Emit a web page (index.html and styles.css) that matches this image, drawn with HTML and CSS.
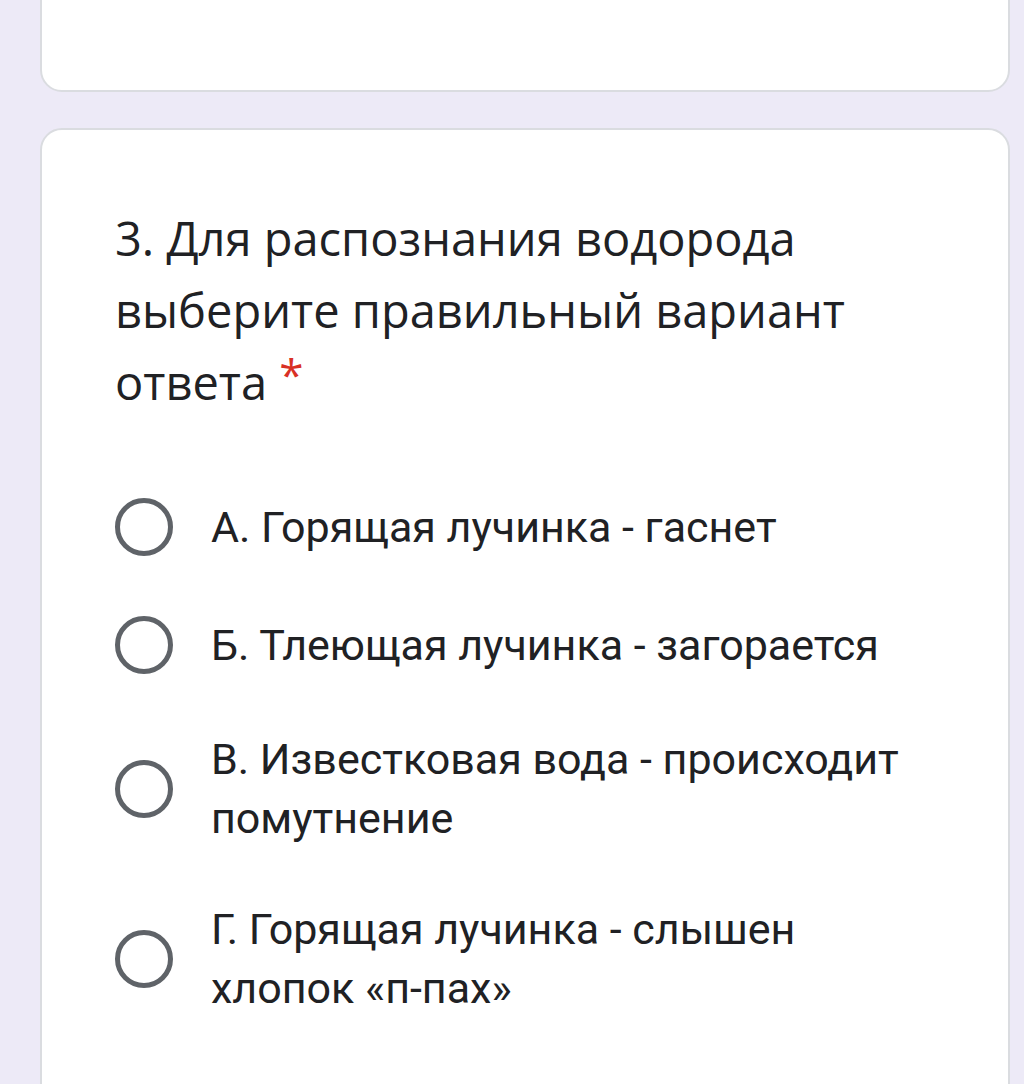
FILE: index.html
```html
<!DOCTYPE html>
<html lang="ru">
<head>
    <meta charset="UTF-8">
    <meta name="viewport" content="width=device-width, initial-scale=1.0">
    <title>Тест</title>
    <link rel="stylesheet" href="styles.css">
</head>
<body>
    <!-- Предыдущий вопрос (виден только низ карточки) -->
    <div class="card card-prev"></div>

    <!-- Вопрос 3 -->
    <div class="card card-question">
        <div class="question">
            3. Для распознания водорода выберите правильный вариант ответа <span class="required">*</span>
        </div>
        <ul class="options">
            <li class="option">
                <span class="radio"></span>
                <span class="option-text">А. Горящая лучинка - гаснет</span>
            </li>
            <li class="option">
                <span class="radio"></span>
                <span class="option-text">Б. Тлеющая лучинка - загорается</span>
            </li>
            <li class="option">
                <span class="radio"></span>
                <span class="option-text">В. Известковая вода - происходит помутнение</span>
            </li>
            <li class="option">
                <span class="radio"></span>
                <span class="option-text">Г. Горящая лучинка - слышен хлопок «п-пах»</span>
            </li>
        </ul>
    </div>
</body>
</html>
```

FILE: styles.css
```css
/* Фон страницы */
body {
    margin: 0;
    padding: 0 14px 0 40px;
    background-color: #edeaf7;
    font-family: Roboto, "Open Sans", sans-serif;
    color: #202124;
    overflow: hidden;
    height: 1084px;
}
/* Карточка формы */
.card {
    background-color: #fff;
    border: 2px solid #dadce0;
    border-radius: 22px;
}
/* Низ предыдущей карточки */
.card-prev {
    height: 120px;
    margin-top: -32px;
    border-top-left-radius: 0;
    border-top-right-radius: 0;
}
.card-question {
    margin-top: 36px;
    padding: 72px 73px 40px 73px;
    min-height: 1100px;
}
/* Текст вопроса */
.question {
    font-family: "Open Sans", sans-serif;
    font-size: 47px;
    line-height: 72px;
    max-width: 740px;
    color: #202124;
}
.required {
    color: #d93025;
    font-size: 44px;
    line-height: 1;
    vertical-align: top;
    position: relative;
    top: 6px;
}
/* Варианты ответа */
.options {
    list-style: none;
    margin: 50px 0 0;
    padding: 0;
}
.option {
    display: flex;
    align-items: center;
    gap: 38px;
    min-height: 118px;
    padding: 26px 0;
    box-sizing: border-box;
}
.radio {
    flex: none;
    width: 48px;
    height: 48px;
    border: 5px solid #5f6368;
    border-radius: 50%;
}
.option-text {
    font-size: 43px;
    line-height: 59px;
}
```
